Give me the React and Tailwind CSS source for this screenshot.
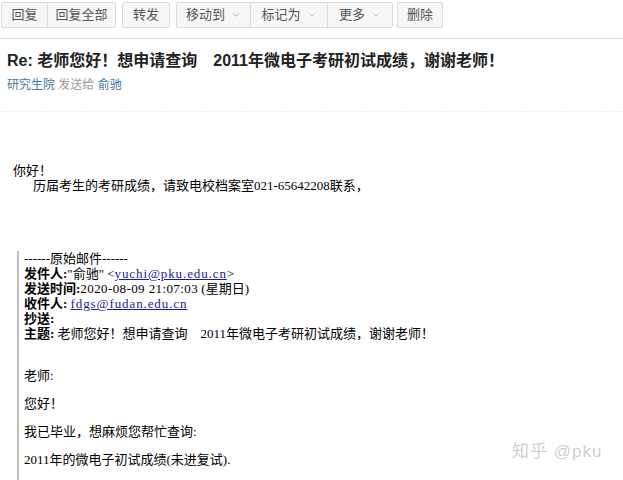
import { ChevronDown } from 'lucide-react'

const sans = { fontFamily: '"Liberation Sans", "Noto Sans CJK SC", sans-serif' }
const song = { fontFamily: '"Liberation Serif", "Noto Sans CJK SC", serif' }

function Btn({ children, menu, className = '' }) {
  return (
    <button className={`h-[26px] flex items-center justify-center gap-1.5 border border-[#dcdcdc] bg-[#f7f7f7] text-[13px] text-[#555] ${className}`}>
      {children}
      {menu && <ChevronDown size={10} strokeWidth={1.75} className="text-[#999]" />}
    </button>
  )
}

export default function App() {
  return (
    <div className="w-[623px] h-[480px] bg-white overflow-hidden relative" style={sans}>
      {/* toolbar */}
      <div className="flex items-start pt-[1px] pl-[1px] h-[39px] border-b border-[#dedede]">
        <div className="flex mt-[1px]">
          <Btn className="w-[47px] rounded-l-[2px]">回复</Btn>
          <Btn className="w-[68px] border-l-0 rounded-r-[2px]">回复全部</Btn>
        </div>
        <Btn className="w-[48px] ml-[6px] mt-[1px] rounded-[2px]">转发</Btn>
        <div className="flex ml-[6px] mt-[1px]">
          <Btn menu className="w-[75px] rounded-l-[2px]">移动到</Btn>
          <Btn menu className="w-[77px] border-l-0">标记为</Btn>
          <Btn menu className="w-[65px] border-l-0 rounded-r-[2px]">更多</Btn>
        </div>
        <Btn className="w-[46px] ml-[4px] mt-[1px] rounded-[2px]">删除</Btn>
      </div>

      {/* header */}
      <div className="px-[7px] pt-[11px]">
        <h1 className="text-[16px] font-bold text-[#222] leading-[22px] whitespace-nowrap">
          Re: 老师您好！想申请查询　2011年微电子考研初试成绩，谢谢老师！
        </h1>
        <div className="text-[12px] leading-[18px] mt-[4px]">
          <span className="text-[#3f78a6]">研究生院</span>
          <span className="text-[#999]"> 发送给 </span>
          <span className="text-[#3f78a6]">俞驰</span>
        </div>
      </div>

      <div className="mt-[17px] border-b border-dashed border-[#f0f0f0]" />

      {/* body */}
      <div className="text-[13px] text-black leading-[15px] pl-[13px] mt-[51px]" style={song}>
        <div>你好！</div>
        <div className="pl-[20px]">历届考生的考研成绩，请致电校档案室021-65642208联系，</div>
      </div>

      <div className="ml-[17px] mt-[58px] border-l-2 border-[#bdbdbd] pl-[5px] pt-[0px] text-[13px] text-black leading-[15px]" style={song}>
        <div>------原始邮件------</div>
        <div>
          <b>发件人:</b>"俞驰" &lt;<span className="text-[#1a1a9c] underline tracking-[0.9px]">yuchi@pku.edu.cn</span>&gt;
        </div>
        <div>
          <b>发送时间:</b><span className="tracking-[0.4px]">2020-08-09 21:07:03</span> (星期日)
        </div>
        <div>
          <b>收件人:</b> <span className="text-[#1a1a9c] underline tracking-[0.9px]">fdgs@fudan.edu.cn</span>
        </div>
        <div>
          <b>抄送:</b>
        </div>
        <div>
          <b>主题:</b> 老师您好！想申请查询　2011年微电子考研初试成绩，谢谢老师！
        </div>
        <div className="mt-[27px] flex flex-col gap-[13px]">
          <div>老师:</div>
          <div>您好！</div>
          <div>我已毕业，想麻烦您帮忙查询:</div>
          <div>2011年的微电子初试成绩(未进复试).</div>
          <div className="h-[20px]" />
        </div>
      </div>

      {/* watermark */}
      <div className="absolute left-[512px] top-[439px] text-[17px] text-[#d0d0d0] tracking-[1px]" style={sans}>
        知乎 @pku
      </div>
    </div>
  )
}
